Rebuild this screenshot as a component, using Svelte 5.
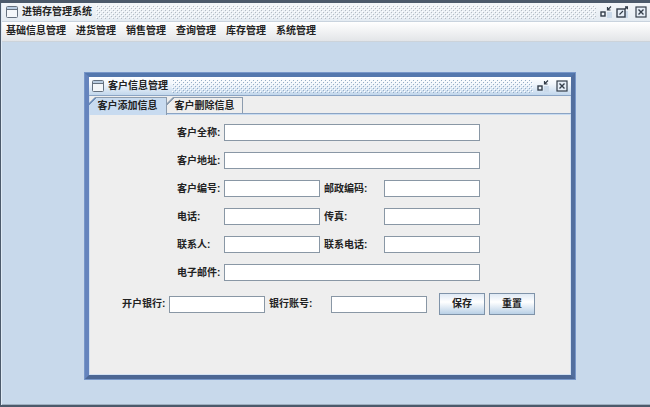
<script>
  const menus = ['基础信息管理', '进货管理', '销售管理', '查询管理', '库存管理', '系统管理'];
  const tabs = ['客户添加信息', '客户删除信息'];

  // one entry per line of the form; a line holds one wide field or two short ones
  const rows = [
    [{ id: 'fullName', label: '客户全称:' }],
    [{ id: 'address', label: '客户地址:' }],
    [{ id: 'code', label: '客户编号:' }, { id: 'zip', label: '邮政编码:' }],
    [{ id: 'phone', label: '电话:' }, { id: 'fax', label: '传真:' }],
    [{ id: 'contact', label: '联系人:' }, { id: 'contactPhone', label: '联系电话:' }],
    [{ id: 'email', label: '电子邮件:' }]
  ];

  const empty = {
    fullName: '', address: '', code: '', zip: '', phone: '', fax: '',
    contact: '', contactPhone: '', email: '', bank: '', account: ''
  };

  let activeTab = $state(0);
  let customer = $state({ ...empty });

  function reset() {
    customer = { ...empty };
  }
</script>

{#snippet windowIcon()}
  <svg class="window-icon" viewBox="0 0 12 12" aria-hidden="true">
    <rect x="0.5" y="0.5" width="11" height="11" rx="1" fill="#f4f7fa" stroke="#65717f" />
    <path d="M1 2h10" stroke="#b9cce0" stroke-width="2" />
    <path d="M1 3.5h10" stroke="#65717f" />
  </svg>
{/snippet}

{#snippet bumps(id, dark)}
  <svg class="bumps" aria-hidden="true">
    <defs>
      <pattern {id} width="4" height="4" patternUnits="userSpaceOnUse">
        <path d="M0 0h1v1h-1zM2 2h1v1h-1z" fill="#fff" />
        <path d="M1 1h1v1h-1zM3 3h1v1h-1z" fill={dark} />
      </pattern>
    </defs>
    <rect width="100%" height="100%" fill="url(#{id})" />
  </svg>
{/snippet}

{#snippet iconifyIcon()}
  <svg class="control-icon" viewBox="0 0 12 12" aria-hidden="true">
    <path d="M7 6h5v6H7z" fill="#cbdaea" />
    <rect x="1" y="6" width="4" height="4" fill="#eef3f8" stroke="#333d49" stroke-width="1.4" />
    <path d="M11 0.5L8 3.5M7.5 1v3h3" fill="none" stroke="#333d49" stroke-width="1.2" />
  </svg>
{/snippet}

{#snippet closeIcon()}
  <svg class="control-icon" viewBox="0 0 12 12" aria-hidden="true">
    <rect x="1" y="1" width="10" height="10" fill="#e6eef7" stroke="#333d49" stroke-width="1.2" />
    <path d="M3.5 3.5l5 5M8.5 3.5l-5 5" stroke="#333d49" stroke-width="1.4" />
  </svg>
{/snippet}

<div class="window">
  <header class="titlebar">
    {@render windowIcon()}
    <span>进销存管理系统</span>
    {@render bumps('bumps-main', '#b4bbc3')}
    <div class="controls">
      <button class="control" aria-label="最小化">{@render iconifyIcon()}</button>
      <button class="control" aria-label="最大化">
        <svg class="control-icon" viewBox="0 0 12 12" aria-hidden="true">
          <path d="M9 5h3v7H9z" fill="#cbdaea" />
          <rect x="1" y="3" width="8" height="8" fill="#e6eef7" stroke="#333d49" stroke-width="1.4" />
          <path d="M3.5 8.5L7 5M9 3L11.5 0.5M9 0.8h2.4v2.4" fill="none" stroke="#333d49" stroke-width="1.2" />
        </svg>
      </button>
      <button class="control close" aria-label="关闭">{@render closeIcon()}</button>
    </div>
  </header>

  <nav class="menubar">
    {#each menus as menu}
      <button class="menu">{menu}</button>
    {/each}
  </nav>

  <main class="desktop">
    <section class="frame">
      <header class="titlebar inner">
        {@render windowIcon()}
        <span>客户信息管理</span>
        {@render bumps('bumps-inner', '#95adc6')}
        <div class="controls">
          <button class="control" aria-label="最小化">{@render iconifyIcon()}</button>
          <button class="control close" aria-label="关闭">{@render closeIcon()}</button>
        </div>
      </header>

      <div class="tabs" role="tablist">
        {#each tabs as tab, i}
          <button
            class="tab"
            class:active={activeTab === i}
            role="tab"
            aria-selected={activeTab === i}
            onclick={() => (activeTab = i)}
          >{tab}</button>
        {/each}
      </div>

      <form class="panel" onsubmit={(e) => e.preventDefault()}>
        {#each rows as row}
          <div class="row">
            {#each row as field, i}
              <label class:second={i > 0} for={field.id}>{field.label}</label>
              <input
                id={field.id}
                class:wide={row.length === 1}
                type="text"
                bind:value={customer[field.id]}
              />
            {/each}
          </div>
        {/each}

        <div class="row last">
          <label for="bank">开户银行:</label>
          <input id="bank" type="text" bind:value={customer.bank} />
          <label class="second" for="account">银行账号:</label>
          <input id="account" type="text" bind:value={customer.account} />
          <div class="actions">
            <button class="action" type="submit">保存</button>
            <button class="action" type="button" onclick={reset}>重置</button>
          </div>
        </div>
      </form>
    </section>
  </main>
</div>

<style>
  :global(body) {
    margin: 0;
  }

  .window,
  .window button,
  .window input {
    font-family: "Liberation Sans", "Noto Sans CJK SC", sans-serif;
    font-size: 10px;
    font-weight: bold;
    line-height: 14px;
    color: #222;
  }

  .window {
    box-sizing: border-box;
    display: flex;
    flex-direction: column;
    min-height: 100vh;
    border: solid #4c5a6b;
    border-width: 3px 0 2px 1px;
    box-shadow: inset 1px 0 #dfeaf5, inset 0 -1px #9fb0c0;
    padding: 0 0 1px 1px;
    background: #c8d9eb;
  }

  button {
    margin: 0;
    padding: 0;
    border: 0;
    background: none;
    white-space: nowrap;
  }

  .titlebar {
    display: flex;
    align-items: center;
    gap: 4px;
    height: 18px;
    padding: 0 3px 0 4px;
    border-bottom: 1px solid #c9d3de;
    background: linear-gradient(#f3f6f9, #e4ebf2);
    white-space: nowrap;
  }

  .titlebar.inner {
    border-bottom-color: #8ba4c4;
    padding: 0 3px;
    background: linear-gradient(#fff, #f0f5fb 40%, #c2d7ec);
  }

  .window-icon {
    flex: none;
    width: 12px;
    height: 12px;
  }

  .bumps {
    flex: 1;
    min-width: 0;
    height: 14px;
  }

  .controls {
    display: flex;
    gap: 4px;
  }

  .control {
    width: 12px;
    height: 12px;
  }

  .control.close {
    margin-left: 3px;
  }

  .control-icon {
    display: block;
    width: 12px;
    height: 12px;
  }

  .menubar {
    display: flex;
    gap: 10px;
    height: 19px;
    padding: 0 4px;
    border-bottom: 1px solid #ccd3da;
    background: linear-gradient(#fff, #e3e5e8);
  }

  .menu {
    padding-bottom: 2px;
  }

  .desktop {
    position: relative;
    flex: 1;
    min-height: 340px;
  }

  .frame {
    position: absolute;
    inset: 31px 75px 25px 83px;
    box-sizing: border-box;
    display: flex;
    flex-direction: column;
    border: 4px solid;
    border-color: #5377ad #526f9f #4c6794 #6584bd;
    outline: 1px solid #7796c8;
    box-shadow: inset 0 0 0 1px #d3e1f2;
    background: #eee;
  }

  .tabs {
    box-sizing: border-box;
    display: flex;
    height: 18px;
    padding-top: 1px;
    border-bottom: 1px solid #8ba4c4;
    box-shadow: 0 1px #c8dbf0;
  }

  .tab {
    width: 76px;
    border: 1px solid #8c9cae;
    border-width: 1px 1px 0 0;
    background: linear-gradient(135deg, #8c9cae 5px, #eee 5px);
    clip-path: polygon(6px 0, 100% 0, 100% 100%, 0 100%, 0 6px);
  }

  .tab.active {
    width: 78px;
    margin-bottom: -2px;
    padding-bottom: 2px;
    background: linear-gradient(135deg, #6f8fb8 5px, #c8dbf0 5px);
  }

  .panel {
    display: flex;
    flex-direction: column;
    align-items: center;
    gap: 11px;
    flex: 1;
    padding: 10px 3px 0 0;
  }

  .row {
    display: flex;
    align-items: center;
    gap: 4px;
  }

  .row.last {
    margin-top: 1px;
  }

  label {
    width: 43px;
    white-space: nowrap;
  }

  label.second {
    width: 56px;
  }

  .last label.second {
    width: 58px;
  }

  input {
    box-sizing: border-box;
    width: 96px;
    height: 17px;
    padding: 0 2px;
    border: 1px solid #8997a5;
    border-radius: 0;
    background: #fff;
    outline: none;
  }

  input.wide {
    width: 256px;
  }

  .actions {
    display: flex;
    gap: 4px;
    margin-left: 8px;
  }

  .action {
    box-sizing: border-box;
    width: 46px;
    height: 22px;
    border: 1px solid #7f93a9;
    background: linear-gradient(#dfe9f4, #fff 40%, #b9d0e6);
  }
</style>
